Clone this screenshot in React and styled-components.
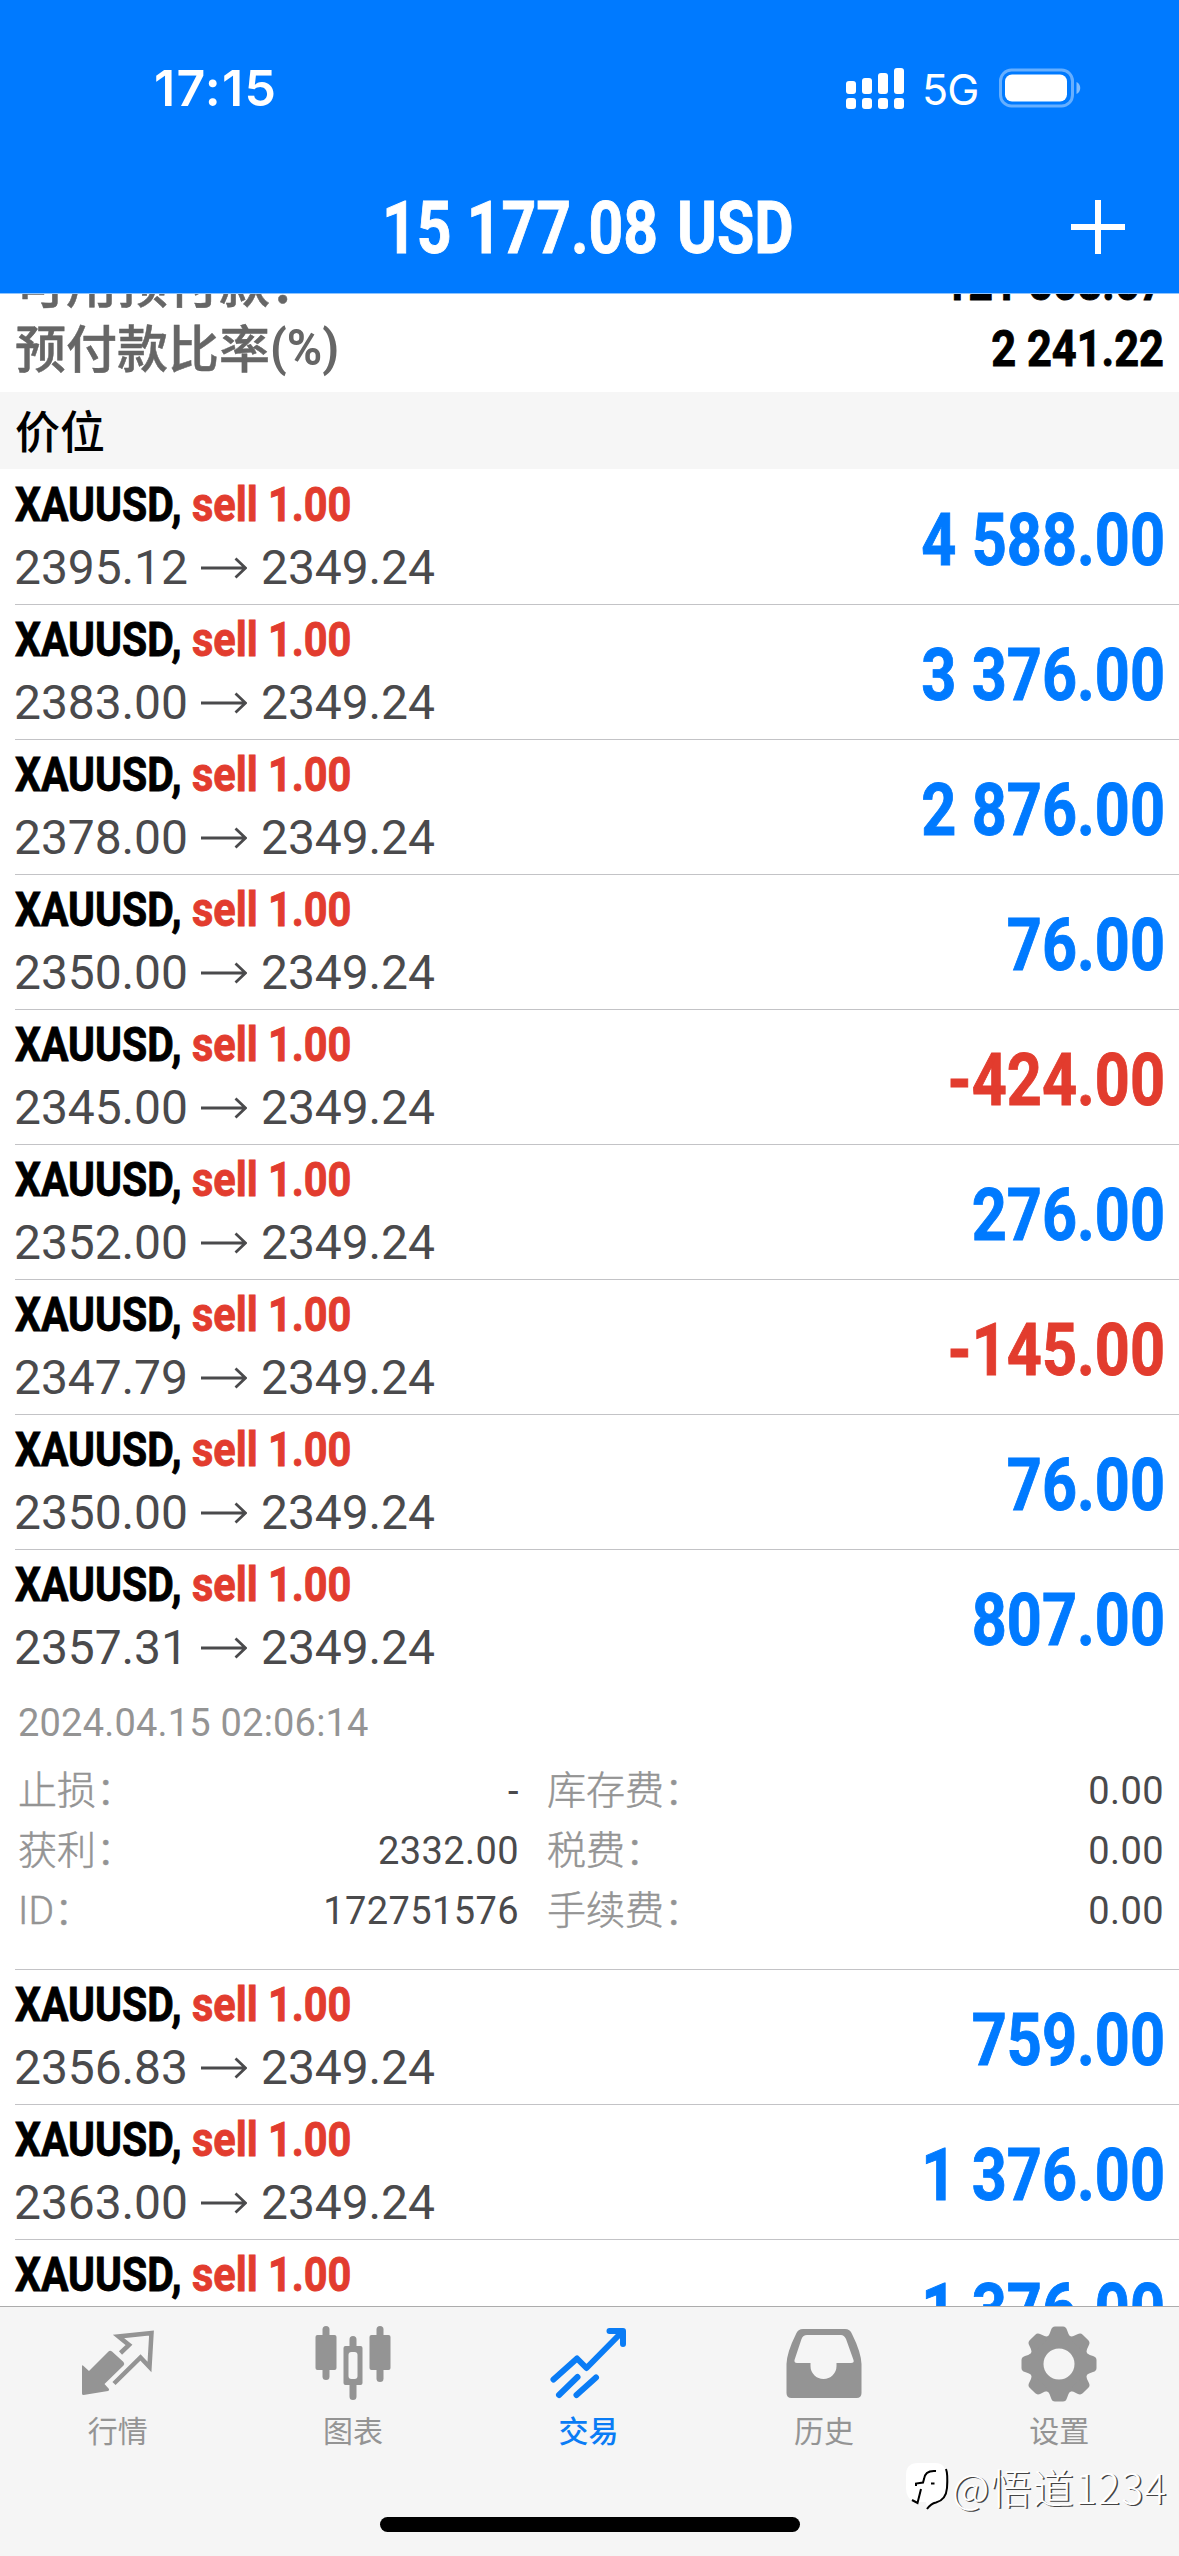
import styled, { createGlobalStyle } from "styled-components";

const GlobalStyle = createGlobalStyle`
    * { box-sizing: border-box; }
    body {
        margin: 0;
        background: #fff;
        font-family: Roboto, "Noto Sans CJK SC", sans-serif;
    }
`

const Screen = styled.div`
    width: 1179px;
    height: 2556px;
    overflow: hidden;
    display: flex;
    flex-direction: column;
    background: #fff;
    position: relative;
`

const Header = styled.header`
    flex: none;
    height: 293px;
    background: #007aff;
    color: #fff;
`

const StatusBar = styled.div`
    height: 160px;
    padding: 15px 98px 0 154px;
    display: flex;
    align-items: center;
    justify-content: space-between;
    font-family: Inter, sans-serif;
`

const Clock = styled.span`
    padding-top: 1px;
    font-size: 50px;
    font-weight: 600;
    letter-spacing: 1.3px;
`

const StatusRight = styled.div`
    display: flex;
    align-items: center;
`

const Network = styled.span`
    width: 57px;
    margin: 3px 20px 0 16px;
    font-size: 43px;
    line-height: 42px;
    letter-spacing: -1px;
`

const NavBar = styled.div`
    height: 133px;
    padding: 0 54px 0 382px;
    display: flex;
    align-items: center;
    justify-content: space-between;
`

// squeezes bold text into a box of fixed width, the condensed face is not installed
const Condensed = styled.span`
    display: flex;
    flex: none;
    justify-content: ${p => p.$end ? "flex-end" : "flex-start"};
    width: ${p => p.$width}px;
    font-weight: 700;
    white-space: pre;
    -webkit-text-stroke: 0.9px currentColor;
    transform: scaleX(${p => p.$scale});
    transform-origin: ${p => p.$end ? "right" : "left"} center;
`

const Balance = styled.h1`
    margin: 0;
    padding-top: 4px;
    display: flex;
    font-size: 72px;
    line-height: 80px;
`

const Content = styled.main`
    flex: 1;
    min-height: 0;
    overflow: hidden;
    border-top: 1px solid #8ec5ff;
`

const Summary = styled.div`
    height: 98px;
    display: flex;
    flex-direction: column;
    justify-content: flex-end;
    padding: 0 15px 12px 15px;
`

const SummaryRow = styled.div`
    flex: none;
    height: 66px;
    display: flex;
    align-items: center;
    justify-content: space-between;
    color: #666;
    font-size: 50px;
    line-height: 66px;
`

const SummaryLabel = styled.span`
    display: flex;
    font-family: "Noto Sans CJK SC", sans-serif;
    font-size: 51px;
    font-weight: 500;
    -webkit-text-stroke: 0.5px currentColor;
`

const Unit = styled(Condensed)`
    padding-top: 2px;
    font-family: Roboto, sans-serif;
    font-size: 50px;
    -webkit-text-stroke: 0;
`

const SummaryValue = styled(Condensed)`
    color: #000;
    padding-top: 3px;
`

const SectionTitle = styled.h2`
    margin: 0 0 1px;
    height: 77px;
    padding: 0 15px;
    background: #f6f6f6;
    font-family: "Noto Sans CJK SC", sans-serif;
    font-size: 45px;
    font-weight: 500;
    line-height: 75px;
`

const Position = styled.section`
    margin-left: 15px;
    border-bottom: 1px solid #c3c3c6;
`

const PositionMain = styled.div`
    height: 134px;
    padding-right: 14px;
    display: flex;
    justify-content: space-between;
`

const Title = styled.div`
    display: flex;
    padding-top: 8px;
    font-size: 48px;
    line-height: 54px;
    color: #000;
`

const Side = styled(Condensed)`
    color: #e23c2e;
`

const Prices = styled.div`
    display: flex;
    align-items: center;
    margin: 7px 0 0 -1px;
    height: 56px;
    font-size: 48px;
    letter-spacing: -0.1px;
    color: #4a4a4c;

    svg { margin: 2px 14px 0 12px; }
`

const Price = styled.span`
    width: 175px;
`

const Amount = styled(Condensed)`
    padding-top: 31px;
    font-size: 72px;
    line-height: 80px;
    color: ${p => p.$loss ? "#e23c2e" : "#007aff"};
`

const Details = styled.div`
    height: 285px;
    padding: 19px 15px 0 3px;
    font-size: 38px;
    color: #949494;
`

const OpenTime = styled.div`
    height: 40px;
    line-height: 40px;
    letter-spacing: 0.2px;
`

const DetailGrid = styled.div`
    display: grid;
    grid-template-columns: 501px 1fr;
    column-gap: 28px;
    grid-auto-rows: 60px;
    margin-top: 18px;
`

const DetailCell = styled.div`
    display: flex;
    justify-content: space-between;
    line-height: 60px;
`

const DetailLabel = styled.span`
    font-weight: 300;
    font-size: 39px;
    -webkit-text-stroke: 0.5px currentColor;
`

const DetailValue = styled.span`
    color: #4a4a4c;
    letter-spacing: 0.4px;
`

const TabBar = styled.nav`
    flex: none;
    height: 250px;
    padding-right: 2px;
    border-top: 1px solid #acacac;
    background: #f5f5f5;
    display: grid;
    grid-template-columns: repeat(5, 1fr);
    align-items: start;
`

const Tab = styled.div`
    display: flex;
    flex-direction: column;
    align-items: center;
    padding-top: 19px;
    color: ${p => p.$active ? "#0a7cf5" : "#949494"};
    font-family: "Noto Sans CJK SC", sans-serif;
    font-size: 30px;
    font-weight: ${p => p.$active ? 500 : 400};
    line-height: 40px;

    svg { display: block; margin-bottom: 7px; }
`

const HomeIndicator = styled.div`
    position: absolute;
    left: 380px;
    bottom: 24px;
    width: 420px;
    height: 15px;
    border-radius: 8px;
    background: #000;
`

const Watermark = styled.div`
    position: absolute;
    left: 906px;
    bottom: 40px;
    display: flex;
    align-items: center;
    color: #fff;
    font-family: "Noto Sans CJK SC", sans-serif;
    font-size: 41px;
    font-weight: 300;
    line-height: 60px;
    letter-spacing: 1.2px;
    white-space: nowrap;
    text-shadow: 1.5px 1px 0 #444;

    svg { margin: 2px 2px 0 0; }
`

const positions = [
    { open: "2395.12", profit: "4 588.00" },
    { open: "2383.00", profit: "3 376.00" },
    { open: "2378.00", profit: "2 876.00" },
    { open: "2350.00", profit: "76.00" },
    { open: "2345.00", profit: "-424.00" },
    { open: "2352.00", profit: "276.00" },
    { open: "2347.79", profit: "-145.00" },
    { open: "2350.00", profit: "76.00" },
    {
        open: "2357.31",
        profit: "807.00",
        time: "2024.04.15 02:06:14",
        details: [
            ["止损：", "-"],
            ["库存费：", "0.00"],
            ["获利：", "2332.00"],
            ["税费：", "0.00"],
            ["ID：", "172751576"],
            ["手续费：", "0.00"],
        ],
    },
    { open: "2356.83", profit: "759.00" },
    { open: "2363.00", profit: "1 376.00" },
    { open: "2363.00", profit: "1 376.00" },
]

const Signal = () => (
    <svg width="60" height="44" viewBox="0 0 60 44" fill="#fff">
        <rect x="0" y="15" width="10" height="13" rx="3" />
        <rect x="16" y="12" width="10" height="16" rx="3" />
        <rect x="32" y="7" width="10" height="21" rx="3" />
        <rect x="48" y="2" width="10" height="26" rx="3" />
        <rect x="0" y="32" width="10" height="11" rx="3" />
        <rect x="16" y="32" width="10" height="11" rx="3" />
        <rect x="32" y="32" width="10" height="11" rx="3" />
        <rect x="48" y="32" width="10" height="11" rx="3" />
    </svg>
)

const Battery = () => (
    <svg width="82" height="40" viewBox="0 0 82 40">
        <rect x="1.5" y="2" width="72" height="36" rx="11" fill="none" stroke="#fff" strokeOpacity=".4" strokeWidth="3" />
        <rect x="6" y="6.500" width="62" height="27" rx="7" fill="#fff" />
        <path d="M77.500 14c5 2 5 10 0 12z" fill="#fff" fillOpacity=".5" />
    </svg>
)

const Plus = () => (
    <svg width="54" height="56" viewBox="0 0 54 56">
        <path d="M27 1v54M0 28h54" stroke="#fff" strokeWidth="6" />
    </svg>
)

const Arrow = () => (
    <svg width="46" height="22" viewBox="0 0 46 22" fill="none" stroke="#4a4a4c" strokeWidth="2.800">
        <path d="M0 11h44M34.500 1.500L44.500 11L34.500 20.500" />
    </svg>
)

const QuotesIcon = () => (
    <svg width="76" height="76" viewBox="0 0 76 76" fill="currentColor">
        <path d="M2 40.500Q2 38.500 3.500 40L9 45L28.500 25.500Q30 24 32 25.500L43.500 36Q45 38 43.500 39.500L24.500 58L29 63Q29.500 64.500 28 65L3.500 69Q2 69 2 67.500z" />
        <path d="M40.500 27L49 19L38.500 10.500L71.500 7L69.500 41L60.500 31.500L34 57.500" fill="none" stroke="currentColor" strokeWidth="4.500" />
    </svg>
)

const ChartIcon = () => (
    <svg width="76" height="76" viewBox="0 0 76 76" fill="currentColor">
        <rect x="7.500" y="0" width="7" height="54" rx="3.500" />
        <rect x="0.500" y="9" width="21" height="35" rx="2" />
        <rect x="61.500" y="0" width="7" height="56" rx="3.500" />
        <rect x="54.500" y="9" width="21" height="35" rx="2" />
        <path d="M34.500 20v-6.500a3.500 3.500 0 0 1 7 0V20h4q2 0 2 2v35q0 2-2 2h-4v11.500a3.500 3.500 0 0 1-7 0V59h-4q-2 0-2-2V22q0-2 2-2z" />
        <rect x="33.500" y="26" width="9" height="27" rx="3" fill="#f5f5f5" />
    </svg>
)

const TradeIcon = () => (
    <svg width="76" height="76" viewBox="0 0 76 76" fill="none" stroke="currentColor" strokeWidth="6" strokeLinecap="round" strokeLinejoin="round">
        <path d="M3.500 53.500L27 32.500L36.500 42L72 6" />
        <path d="M59.500 5H73V18" />
        <path d="M9 69L27.500 51M26.500 69L46 51.500" />
    </svg>
)

const HistoryIcon = () => (
    <svg width="76" height="76" viewBox="0 0 76 76" fill="currentColor">
        <path fillRule="evenodd" d="M17 3H59Q64 3 66 8Q75 26 75.500 38V67Q75.500 72 70.500 72H5.500Q.5 72 .5 67V38Q1 26 10 8Q12 3 17 3zM21 9Q17 9 15.500 13L8.500 34Q8 37 11 37H24.500V40A13 13 0 0 0 50.500 40V37H65Q68.500 37 67.500 34L60 13Q58 9 55 9z" />
    </svg>
)

const SettingsIcon = () => (
    <svg width="76" height="76" viewBox="0 0 76 76">
        <g fill="currentColor">
            <circle cx="38" cy="38" r="30" />
            {[0, 45, 90, 135, 180, 225, 270, 315].map(a => (
                <path key={a} transform={`rotate(${a} 38 38)`} d="M26 12Q29 8 30 4Q31 .5 34 .5H42Q45 .5 46 4Q47 8 50 12z" />
            ))}
        </g>
        <circle cx="38" cy="38" r="15.500" fill="#f5f5f5" />
    </svg>
)

const WatermarkLogo = () => (
    <svg width="44" height="50" viewBox="0 0 44 50">
        <path d="M12 1H29Q40 1 40 13V28Q40 38 30 40Q24 42 21 46L20 40L8 40Q0 36 0 26V13Q0 1 12 1z" fill="#fff" />
        <path d="M40 7Q42 12 41 26Q40 38 30 40.500Q25 41.500 21 47" fill="none" stroke="#000" strokeWidth="2" />
        <path d="M30 9Q19 8 18 17L17 20.500L10 21.500V24M25 21.500H28.500M15 27L11.500 41L6 38" fill="none" stroke="#000" strokeWidth="2" />
    </svg>
)

const tabs = [
    { label: "行情", Icon: QuotesIcon },
    { label: "图表", Icon: ChartIcon },
    { label: "交易", Icon: TradeIcon, active: true },
    { label: "历史", Icon: HistoryIcon },
    { label: "设置", Icon: SettingsIcon },
]

function PositionRow({ open, profit, time, details }) {return(
    <Position>
        <PositionMain>
            <div>
                <Title>
                    <Condensed $width={177} $scale={0.852}>XAUUSD,</Condensed>
                    <Side $width={160} $scale={0.864}>sell 1.00</Side>
                </Title>
                <Prices>
                    <Price>{open}</Price>
                    <Arrow />
                    <Price>2349.24</Price>
                </Prices>
            </div>
            <Amount $end $width={250} $scale={0.85} $loss={profit.startsWith("-")}>{profit}</Amount>
        </PositionMain>
        {details && (
            <Details>
                <OpenTime>{time}</OpenTime>
                <DetailGrid>
                    {details.map(([label, value]) => (
                        <DetailCell key={label}>
                            <DetailLabel>{label}</DetailLabel>
                            <DetailValue>{value}</DetailValue>
                        </DetailCell>
                    ))}
                </DetailGrid>
            </Details>
        )}
    </Position>
)};

function App() {return(
    <>
        <GlobalStyle />
        <Screen>
            <Header>
                <StatusBar>
                    <Clock>17:15</Clock>
                    <StatusRight>
                        <Signal />
                        <Network>5G</Network>
                        <Battery />
                    </StatusRight>
                </StatusBar>
                <NavBar>
                    <Balance>
                        <Condensed $width={295} $scale={0.842}>15 177.08</Condensed>
                        <Condensed $width={117} $scale={0.842}>USD</Condensed>
                    </Balance>
                    <Plus />
                </NavBar>
            </Header>
            <Content>
                <Summary>
                    <SummaryRow>
                        <SummaryLabel>可用预付款：</SummaryLabel>
                        <SummaryValue $end $width={230} $scale={0.86}>121 508.67</SummaryValue>
                    </SummaryRow>
                    <SummaryRow>
                        <SummaryLabel>
                            预付款比率
                            <Unit $width={66} $scale={0.96}>(%)</Unit>
                        </SummaryLabel>
                        <SummaryValue $end $width={200} $scale={0.868}>2 241.22</SummaryValue>
                    </SummaryRow>
                </Summary>
                <SectionTitle>价位</SectionTitle>
                {positions.map((p, i) => <PositionRow key={i} {...p} />)}
            </Content>
            <TabBar>
                {tabs.map(({ label, Icon, active }) => (
                    <Tab key={label} $active={active}>
                        <Icon />
                        {label}
                    </Tab>
                ))}
            </TabBar>
            <HomeIndicator />
            <Watermark>
                <WatermarkLogo />
                @悟道1234
            </Watermark>
        </Screen>
    </>
)};

export default App;
